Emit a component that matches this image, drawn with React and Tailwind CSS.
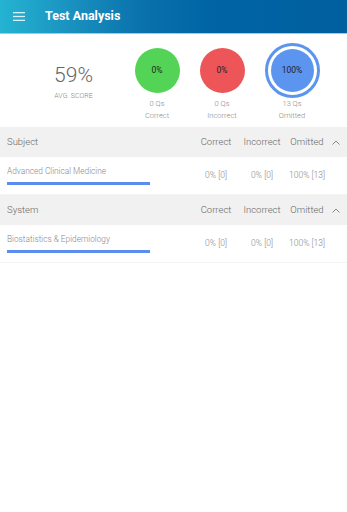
import React from "react";

function Circle({ color, label, count, name, ring }) {
  return (
    <div className="flex flex-col items-center w-[60px]">
      <div className="h-[56px] flex items-center justify-center">
        {ring ? (
          <div className="w-[55px] h-[55px] rounded-full border-[3px] border-[#5b95ef] flex items-center justify-center">
            <div className="w-[43px] h-[43px] rounded-full bg-[#5b95ef] flex items-center justify-center text-[8.5px] text-[#222]">
              {label}
            </div>
          </div>
        ) : (
          <div className={`w-[45px] h-[45px] rounded-full flex items-center justify-center text-[8.5px] text-[#222] ${color}`}>
            {label}
          </div>
        )}
      </div>
      <div className="text-[7.5px] leading-[12px] text-[#888] text-center font-light">
        <div>{count}</div>
        <div>{name}</div>
      </div>
    </div>
  );
}

function Section({ title, name }) {
  return (
    <div>
      <div className="h-[30px] bg-[#f1f1f1] flex items-center text-[9.5px] text-[#666] font-light">
        <div className="pl-[7px] flex-1">{title}</div>
        <div className="w-[46px] text-center">Correct</div>
        <div className="w-[46px] text-center">Incorrect</div>
        <div className="w-[44px] text-center">Omitted</div>
        <div className="w-[18px] flex items-center justify-center pr-[4px]">
          <svg width="8" height="5" viewBox="0 0 8 5" fill="none" stroke="#888" strokeWidth="1">
            <path d="M0.5 4.5 L4 1 L7.5 4.5" />
          </svg>
        </div>
      </div>
      <div className="h-[38px] bg-white flex items-center border-b border-[#f4f4f4] font-light">
        <div className="flex-1 pl-[7px]">
          <div className="text-[8.3px] text-[#888] leading-[10px] mb-[6px]">{name}</div>
          <div className="w-[143px] h-[3px] bg-[#5b8def]"></div>
        </div>
        <div className="w-[46px] text-center text-[8.5px] text-[#888]">0% [0]</div>
        <div className="w-[46px] text-center text-[8.5px] text-[#888]">0% [0]</div>
        <div className="w-[44px] text-center text-[8.5px] text-[#888]">100% [13]</div>
        <div className="w-[18px]"></div>
      </div>
    </div>
  );
}

export default function App() {
  return (
    <div className="w-[347px] h-[512px] bg-white overflow-hidden" style={{ fontFamily: "Roboto, 'Liberation Sans', sans-serif" }}>
      <div className="h-[34px] border-b border-[#8fd3ea] bg-[linear-gradient(90deg,#24b4d2_0%,#1a92c0_20%,#0a72ad_40%,#0065a5_60%,#005f9f_100%)] flex items-center">
        <div className="w-[36px] flex items-center justify-center pl-[2px]">
          <svg width="12" height="9" viewBox="0 0 12 9" fill="#d8f0f8">
            <rect x="0" y="0" width="12" height="1.3" />
            <rect x="0" y="3.85" width="12" height="1.3" />
            <rect x="0" y="7.7" width="12" height="1.3" />
          </svg>
        </div>
        <div className="ml-[9px] text-white font-bold text-[12.5px]">Test Analysis</div>
      </div>
      <div className="h-[93px] flex items-start">
        <div className="w-[120px] pt-[30px] flex flex-col items-center pl-[27px]">
          <div className="text-[21px] leading-[22px] text-[#666] font-light">59%</div>
          <div className="text-[7px] text-[#888] mt-[5px] font-light">AVG. SCORE</div>
        </div>
        <div className="pl-[7px] pt-[8px]">
          <Circle color="bg-[#53d457]" label="0%" count="0 Qs" name="Correct" />
        </div>
        <div className="pl-[5px] pt-[8px]">
          <Circle color="bg-[#ee5558]" label="0%" count="0 Qs" name="Incorrect" />
        </div>
        <div className="pl-[10px] pt-[8px]">
          <Circle ring label="100%" count="13 Qs" name="Omitted" />
        </div>
      </div>
      <Section title="Subject" name="Advanced Clinical Medicine" />
      <Section title="System" name="Biostatistics & Epidemiology" />
    </div>
  );
}
